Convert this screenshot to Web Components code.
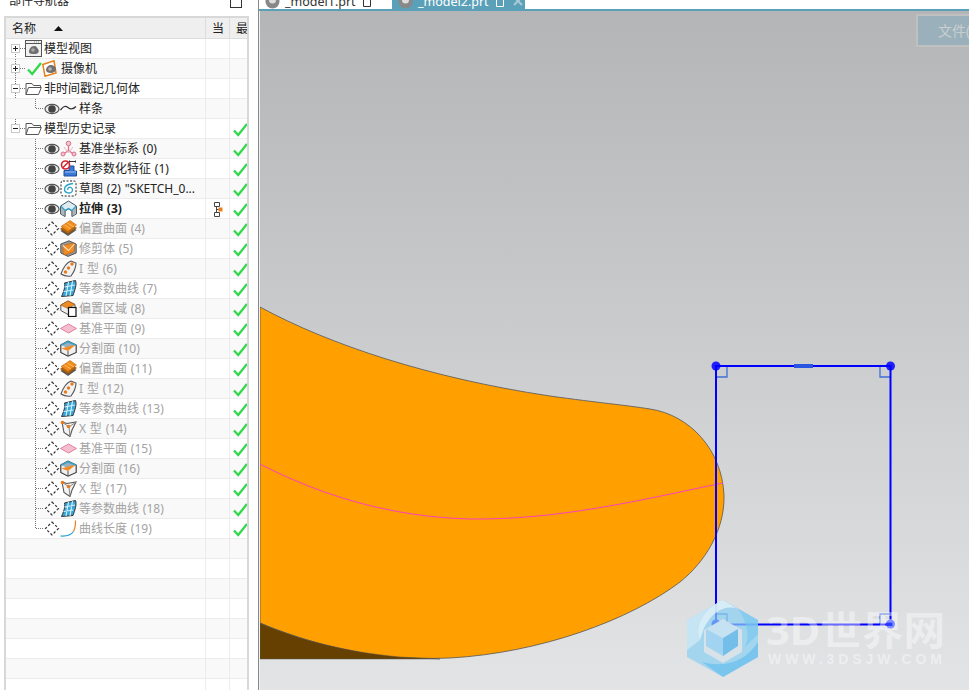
<!doctype html>
<html>
<head>
<meta charset="utf-8">
<title>部件导航器</title>
<style>
  html, body { margin: 0; height: 100%; overflow: hidden; background: #fff; }
  body { display: flex; height: 690px; font: 12px "Noto Sans", "Noto Sans CJK SC", sans-serif; color: #222; }
</style>
</head>
<body>
<part-navigator>
  <nav-row tree="plus" first icon="view">模型视图</nav-row>
  <nav-row tree="plus" checked icon="camera" alt>摄像机</nav-row>
  <nav-row tree="minus" icon="folder">非时间戳记几何体</nav-row>
  <nav-row tree="leaf" last eye icon="spline" alt>样条</nav-row>
  <nav-row tree="minus" end icon="folder" ok>模型历史记录</nav-row>
  <nav-row tree="leaf" eye icon="csys" ok alt>基准坐标系 (0)</nav-row>
  <nav-row tree="leaf" eye icon="nonparam" ok>非参数化特征 (1)</nav-row>
  <nav-row tree="leaf" eye icon="sketch" ok alt>草图 (2) "SKETCH_0...</nav-row>
  <nav-row tree="leaf" eye icon="extrude" ok bold current>拉伸 (3)</nav-row>
  <nav-row tree="leaf" off icon="offset" ok alt>偏置曲面 (4)</nav-row>
  <nav-row tree="leaf" off icon="trim" ok>修剪体 (5)</nav-row>
  <nav-row tree="leaf" off icon="itype" ok alt>I 型 (6)</nav-row>
  <nav-row tree="leaf" off icon="iso" ok>等参数曲线 (7)</nav-row>
  <nav-row tree="leaf" off icon="region" ok alt>偏置区域 (8)</nav-row>
  <nav-row tree="leaf" off icon="plane" ok>基准平面 (9)</nav-row>
  <nav-row tree="leaf" off icon="split" ok alt>分割面 (10)</nav-row>
  <nav-row tree="leaf" off icon="offset" ok>偏置曲面 (11)</nav-row>
  <nav-row tree="leaf" off icon="itype" ok alt>I 型 (12)</nav-row>
  <nav-row tree="leaf" off icon="iso" ok>等参数曲线 (13)</nav-row>
  <nav-row tree="leaf" off icon="xtype" ok alt>X 型 (14)</nav-row>
  <nav-row tree="leaf" off icon="plane" ok>基准平面 (15)</nav-row>
  <nav-row tree="leaf" off icon="split" ok alt>分割面 (16)</nav-row>
  <nav-row tree="leaf" off icon="xtype" ok>X 型 (17)</nav-row>
  <nav-row tree="leaf" off icon="iso" ok alt>等参数曲线 (18)</nav-row>
  <nav-row tree="leaf" last off icon="length" ok>曲线长度 (19)</nav-row>
  <nav-row alt></nav-row>
  <nav-row></nav-row>
  <nav-row alt></nav-row>
  <nav-row></nav-row>
  <nav-row alt></nav-row>
  <nav-row></nav-row>
  <nav-row alt></nav-row>
  <nav-row></nav-row>
</part-navigator>
<model-view>
  <doc-tab>_model1.prt</doc-tab>
  <doc-tab active>_model2.prt</doc-tab>
</model-view>

<script>
const ICONS = {
  view: `<rect x=".5" y=".5" width="16" height="16" fill="#f1f1f1" stroke="#555"/><path d="M1 3.500h15" stroke="#555"/><path d="M9 2h1M11 2h1M13 2h1" stroke="#999"/><path d="M4 12c0-3 2-6 5-6s3 2 4 3 1 3 0 4-3 1-4 1-5 0-5-2z" fill="#707070"/><circle cx="8" cy="10" r="1.800" fill="#aaa"/>`,
  camera: `<path d="M.8 4.500 12 .8 14 13 3 16.200z" fill="#fff" stroke="#e8801a" stroke-width="1.500"/><path d="M4 10c0-3 3-5 5-5s5 2 5 4-2 4-5 4-5-1-5-3z" fill="#707070"/><circle cx="8" cy="9" r="1.800" fill="#b5b5b5"/>`,
  folder: `<path d="M1 14.500V3.500h6l1.500 2h7v2" fill="#fff" stroke="#555"/><path d="M1 14.500 3.500 7.500h12.800l-2.800 7z" fill="#fff" stroke="#555"/>`,
  spline: `<path d="M.5 10c3-4 5-4.500 7.500-2.500s5 2 8-1" fill="none" stroke="#333" stroke-width="1.300"/>`,
  csys: `<path d="M8.500 5.500v5M8.500 10.500l-5 3.500M8.500 10.500l5 3.500" stroke="#d9728d" stroke-width="1.300" fill="none"/><circle cx="8.500" cy="3.500" r="2.300" fill="#f4c3d0" stroke="#d9728d"/><circle cx="3" cy="14" r="2" fill="#f4c3d0" stroke="#d9728d"/><circle cx="14" cy="14" r="2" fill="#f4c3d0" stroke="#d9728d"/><path d="M4 7 8.500 13 13 7" fill="none" stroke="#eeb2c2"/>`,
  nonparam: `<path d="M4 10.500h5V6h5v5h2.500v5H4z" fill="#3a78d6" stroke="#1d4f9e"/><path d="M5 12h11" stroke="#9cc2f2"/><circle cx="5.500" cy="5" r="4" fill="#fff" stroke="#d8222a" stroke-width="1.600"/><path d="M2.800 7.800 8.300 2.300" stroke="#d8222a" stroke-width="1.500"/><path d="M9.500 1.500h6M9.500 .5v2M15.500 .5v2" stroke="#333"/>`,
  sketch: `<rect x="1" y="1" width="15" height="15" rx="2" fill="#fff" stroke="#222" stroke-dasharray="2 1.500"/><path d="M13 3.500C8 4 4.500 6 4.500 9.500s4.500 4 6.500 3 2-4 0-5-4 1-3 2.500" fill="none" stroke="#28a3c7" stroke-width="1.300"/>`,
  extrude: `<path d="M.5 6 8.500 1 16.500 6v8l-4.500 2.500V11L8.500 9 5 11v5.500L.5 14z" fill="#dcecf2" stroke="#4d5a60"/><path d="M.8 6l4.200 4.500 3.500-2 3.500 2L16.200 6" fill="none" stroke="#2f9fca" stroke-width="1.200"/><path d="M5 11v5.500M12 11v5.500" stroke="#6e7a80"/><path d="M1 7v7l4 2v-5zM16 7v7l-4 2v-5z" fill="#8a9499" opacity=".6"/>`,
  offset: `<path d="M.5 11 9 5l7.500 5L8 16z" fill="#5a5a5a"/><path d="M.5 9 9 3l7.500 5L8 14z" fill="#b3640f" stroke="#7c4a16" stroke-width=".6"/><path d="M1 6.500 10 .5l6.500 4.500L8 11.500z" fill="#f28d1c" stroke="#b86a14" stroke-width=".6"/><path d="M4.500 5 11 9M7.500 3 14 7" stroke="#ffc070" stroke-width=".9"/>`,
  trim: `<path d="M.8 4 9 .8 16.200 4v9L8 16.400.8 13z" fill="#9a9a9a" stroke="#555"/><path d="M3 5.500l9.500-2.500 2 1v7.500L5.500 15 3 13.500z" fill="#ef8b24" stroke="#a85f16" stroke-width=".6"/><path d="M3 5.500l5.500 5L14.500 4" fill="none" stroke="#ffe0b8" stroke-width="1.100"/>`,
  itype: `<path d="M1 14C3 8 6 3 11 1l5 2c0 5-2 9-5 13-3 .5-7 0-10-2z" fill="#f2f2f2" stroke="#555" stroke-width="1.100"/><circle cx="12" cy="4" r="1.700" fill="#e87a1c"/><circle cx="8.500" cy="8" r="1.700" fill="#e87a1c"/><circle cx="5.500" cy="12" r="1.700" fill="#e87a1c"/>`,
  iso: `<path d="M4.500 3 15.500.5c1.500 4-.5 9-2.500 15L1.500 16.500C3.500 12 5.500 7 4.500 3z" fill="#39a6d8" stroke="#333"/><path d="M4.500 7 15 5M3.500 11.500 13.500 10M8.500 2 6 16M12.500 1.200 10 15.800" stroke="#d6f1fb" stroke-width="1.100" fill="none"/>`,
  region: `<path d="M.8 5 8 1 15 4.500v6L8 14.500.8 10.500z" fill="#eee" stroke="#555"/><path d="M.8 5 8 1 15 4.500 8 8.500z" fill="#ef8b24" stroke="#a85f16" stroke-width=".7"/><rect x="8.500" y="7.500" width="7.500" height="9" fill="#fff" stroke="#111" stroke-width="1.200"/>`,
  plane: `<path d="M.5 8.500 8.500 4 16.500 8.500 8.500 13z" fill="#f6bdd0" stroke="#e0809f"/>`,
  split: `<path d="M.8 5 8 1l8.200 4v7.500L8 16.200.8 12.500z" fill="#f0f0f0" stroke="#333" stroke-width="1.100"/><path d="M1.500 5 8 1.800 15.500 5 8 8.500z" fill="#9ab0bb"/><path d="M1.500 8.500 10 6l5.500-1L8 11z" fill="#ef8b24"/><path d="M1.500 5 8 1.800 15.500 5" fill="none" stroke="#37a5cc" stroke-width="1.400"/><path d="M8 11v5" stroke="#555"/>`,
  xtype: `<path d="M2 2 7 3.500 16 2l-4 8-2 6.500-6-4z" fill="#f4f4f4" stroke="#555" stroke-width="1.100"/><path d="M16 2 9 7l1 9.500M9 7 2 2" fill="none" stroke="#888"/><circle cx="2.500" cy="2.500" r="1.800" fill="#e87a1c"/><circle cx="8.500" cy="6.500" r="1.800" fill="#e87a1c"/>`,
  length: `<path d="M.5 16c6 .5 10.500-1 13-4.500" fill="none" stroke="#1c9ed0" stroke-width="1.200"/><path d="M13.500 11.500C15 9 15.500 5 15.500 .5" fill="none" stroke="#e8801a" stroke-width="1.200"/>`
};

const svgIcon = (name, size = 17) =>
  `<svg width="${size}" height="${size}" viewBox="0 0 17 17">${ICONS[name] || ""}</svg>`;

const EYE = `<svg width="16" height="17" viewBox="0 0 16 17"><ellipse cx="8" cy="9" rx="7" ry="4.700" fill="#eee" stroke="#555" stroke-width="1.200"/><circle cx="8" cy="9" r="3.800" fill="#444"/></svg>`;
const HIDDEN = `<svg width="16" height="17" viewBox="0 0 16 17"><path d="M8 2 14.500 8.500 8 15 1.500 8.500z" fill="none" stroke="#333" stroke-width="1.200" stroke-dasharray="2.500 2"/></svg>`;
const CHECK = `<svg width="15" height="14" viewBox="0 0 15 14"><path d="M1 7.500 5.200 12 14 1" fill="none" stroke="#2fd94a" stroke-width="2.300"/></svg>`;
const FLOW = `<svg width="9" height="15" viewBox="0 0 9 15"><path d="M.5 .5h5v4h-5zM.5 10.500h5v4h-5z" fill="#fff" stroke="#444"/><path d="M4.500 5.500h4v4h-4z" fill="#e8801a"/><path d="M2.500 4.500v6M2.500 7.500h2" stroke="#444"/></svg>`;

class PartNavigator extends HTMLElement {
  constructor() {
    super();
    const shadow = this.attachShadow({ mode: "open" });
    shadow.innerHTML = `
      <style>
        :host { display: flex; flex-direction: column; flex: none; width: 258px; height: 690px; overflow: hidden; background: #fff; }
        .title { display: flex; justify-content: space-between; height: 16px; padding: 0 16px 0 9px; overflow: hidden; }
        .title span { margin-top: -8px; line-height: 17px; }
        .title i { display: block; width: 10px; height: 8px; margin-top: -2px; border: 1px solid #333; }
        .table { width: 241px; margin-left: 4px; border: 2px solid #d8d8d8; border-bottom: 0; flex: 1; overflow: hidden; }
        .head { display: grid; grid-template-columns: 199px 1px 23px 1px 17px; height: 21px; background: #efefef; border-bottom: 1px solid #dcdcdc; box-sizing: border-box; line-height: 21px; }
        .head b { font-weight: normal; white-space: nowrap; overflow: hidden; }
        .name { display: flex; align-items: center; padding-left: 6px; }
        .name svg { margin-left: 18px; }
        .rule { background: #dcdcdc; }
        .cur { padding-left: 6px; }
        .last { padding-left: 6px; }
      </style>
      <div class="title"><span>部件导航器</span><i></i></div>
      <div class="table">
        <div class="head">
          <b class="name">名称<svg width="9" height="5" viewBox="0 0 9 5"><path d="M0 5 4.500 0 9 5z" fill="#111"/></svg></b>
          <span class="rule"></span><b class="cur">当</b><span class="rule"></span><b class="last">最</b>
        </div>
        <slot></slot>
      </div>`;
  }
}

class NavRow extends HTMLElement {
  connectedCallback() {
    const shadow = this.attachShadow({ mode: "open" });
    const has = (a) => this.hasAttribute(a);
    const tree = this.getAttribute("tree");
    const icon = this.getAttribute("icon");

    let lines = "";
    if (tree === "plus" || tree === "minus") {
      const from = has("first") ? 9 : 0;
      const to = has("end") ? 9 : 20;
      lines = `<path d="M9.500 ${from}V${to}M14 9.500h6" stroke="#777" stroke-dasharray="1 1" fill="none"/>
        <rect x="5.500" y="5.500" width="8" height="8" fill="#fff" stroke="#c8c8c8"/>
        <path d="M7 9.500h5${tree === "plus" ? "M9.500 7v5" : ""}" stroke="#222"/>`;
      if (has("end")) lines += `<path d="M29.500 17v3" stroke="#777" stroke-dasharray="1 1"/>`;
    } else if (tree === "leaf") {
      lines = `<path d="M29.500 0V${has("last") ? 9.5 : 20}M30 9.500h8" stroke="#777" stroke-dasharray="1 1" fill="none"/>`;
    }
    const width = tree === "leaf" ? 38 : 19;

    shadow.innerHTML = `
      <style>
        :host { display: grid; grid-template-columns: 199px 1px 23px 1px 17px; height: 20px; box-sizing: border-box; border-bottom: 1px solid #ececec; background: ${has("alt") ? "#f9f9f9" : "#fff"}; color: ${has("off") ? "#a3a3a3" : "#222"}; font-weight: ${has("bold") ? 700 : 400}; }
        .name { display: flex; align-items: center; white-space: nowrap; overflow: hidden; line-height: 19px; word-spacing: .7px; }
        svg { display: block; flex: none; }
        .label { margin-left: 2px; }
        .rule { background: #ececec; }
        .cell { display: flex; align-items: center; overflow: hidden; padding-top: 2px; box-sizing: border-box; }
        .cur { padding-left: 8px; }
        .last { padding-left: 3px; }
      </style>
      <div class="name">
        ${tree ? `<svg width="${width}" height="19" viewBox="0 0 ${width} 19">${lines}</svg>` : ""}
        ${has("checked") ? CHECK.replace('width="15"', 'width="17"').replace('viewBox="0 0 15 14"', 'viewBox="-1 0 15 14"') : ""}
        ${has("eye") ? EYE : ""}${has("off") ? HIDDEN : ""}
        ${icon ? svgIcon(icon) : ""}
        <span class="label"><slot></slot></span>
      </div>
      <span class="rule"></span>
      <div class="cell cur">${has("current") ? FLOW : ""}</div>
      <span class="rule"></span>
      <div class="cell last">${has("ok") ? CHECK : ""}</div>`;
  }
}

class DocTab extends HTMLElement {
  connectedCallback() {
    const shadow = this.attachShadow({ mode: "open" });
    const active = this.hasAttribute("active");
    shadow.innerHTML = `
      <style>
        :host { display: flex; width: 133px; height: 9px; overflow: hidden; box-sizing: border-box; padding-left: 6px; background: ${active ? "#5ba0b9" : "#fff"}; color: ${active ? "#fff" : "#333"}; font-size: 12.500px; }
        .in { display: flex; gap: 5px; margin-top: -8px; height: 18px; align-items: center; }
        .doc { margin-left: 1px; }
      </style>
      <div class="in">
        <svg width="15" height="15" viewBox="0 0 15 15"><circle cx="7.500" cy="7.500" r="7" fill="#888"/><circle cx="7.500" cy="6" r="3.500" fill="#ddd"/></svg>
        <slot></slot>
        <svg class="doc" width="10" height="12" viewBox="0 0 10 12"><path d="M1.500 .5h5l2 2v9h-7z" fill="none" stroke="${active ? "#fff" : "#333"}"/></svg>
        ${active ? `<svg style="margin-left:3px" width="10" height="10" viewBox="0 0 10 10"><path d="M1 1l8 8M9 1l-8 8" stroke="#a9cbd8" stroke-width="2"/></svg>` : ""}
      </div>`;
  }
}

class SiteWatermark extends HTMLElement {
  constructor() {
    super();
    const shadow = this.attachShadow({ mode: "open" });
    shadow.innerHTML = `
      <style>
        :host { position: absolute; left: 427px; top: 589px; display: block; width: 270px; height: 90px; }
        svg { display: block; overflow: visible; }
        text { fill: #fff; }
      </style>
      <svg width="270" height="90" viewBox="687 600 270 90">
        <path d="M723 600 758 620V657L723 677 687 657V620z" fill="#8ad0f3" opacity=".72"/>
        <path d="M723 600 738 609C748 622 750 640 744 648L758 634V620z" fill="#74c6ee" opacity=".6"/>
        <path d="M723 600 687 620V650L700 640C694 625 704 608 723 600z" fill="#d2e9f5" opacity=".75"/>
        <path d="M723 600 738 609C725 604 712 612 704 628L700 640C694 625 704 608 723 600z" fill="#e4f1f7" opacity=".8"/>
        <path d="M702 662 723 677 758 657V642C745 662 725 668 702 662z" fill="#62bdec" opacity=".65"/>
        <path d="M723 619 742 630V652L723 663 704 652V630z" fill="#e3e5e7" opacity=".8"/>
        <path d="M706 629 723 620 738 629 723 638z" fill="#c4e2f2"/>
        <path d="M706 629 723 638V656L706 646z" fill="#a2d3f1"/>
        <path d="M723 638 738 629V646L723 656z" fill="#74bfe9"/>
        <text x="766" y="645" font-family="'Noto Sans','Noto Sans CJK SC',sans-serif" font-weight="700" font-size="40" textLength="179" lengthAdjust="spacingAndGlyphs" opacity=".42">3D世界网</text>
        <text x="768" y="664" font-family="'Liberation Sans',sans-serif" font-weight="700" font-size="14" textLength="174" opacity=".42">WWW.3DSJW.COM</text>
      </svg>`;
  }
}

class ModelView extends HTMLElement {
  constructor() {
    super();
    const shadow = this.attachShadow({ mode: "open" });
    shadow.innerHTML = `
      <style>
        :host { display: flex; flex-direction: column; flex: 1; min-width: 0; height: 690px; overflow: hidden; border-left: 1px solid #858a8e; }
        .tabs { display: flex; flex: none; height: 9px; background: #fff; }
        .accent { flex: none; height: 2px; background: #5ba0b9; }
        .port { position: relative; flex: 1; display: flex; border-left: 1px solid #f0f0f0; background: linear-gradient(#b4b5b7, #e3e4e6); overflow: hidden; }
        .port > svg { display: block; }
        .file { position: absolute; left: 656px; top: 3px; width: 60px; height: 29px; border: 2px solid #c0c0c0; background: #9ab1bb; color: #c9ced1; font-size: 14px; line-height: 29px; padding-left: 20px; white-space: nowrap; }
      </style>
      <div class="tabs"><slot></slot></div>
      <div class="accent"></div>
      <div class="port">
        <svg width="709" height="679" viewBox="260 11 709 679">
          <path d="M260 307C330 345 430 378 550 396 600 403 625 405 650 409 690 415 722 450 724 495 725 530 705 562 680 582 630 620 540 653 450 658 420 659 395 658 380 656 340 650 300 640 260 623z" fill="#ff9f00" stroke="#555" stroke-width=".8"/>
          <path d="M260 623C300 640 345 652 400 657L440 659H260z" fill="#664000" stroke="#555" stroke-width=".5"/>
          <path d="M260 464C320 495 390 517 470 519 560 520 640 500 723 483" fill="none" stroke="#ff40c0"/>
          <path d="M717 377H727V367M880 367V377H890M717 614H727V624M880 624V614H890" fill="none" stroke="#3f6fd8" stroke-width="1.300"/>
          <path d="M716 366H890.500V624.500H716z" fill="none" stroke="#0000ff" stroke-width="2"/>
          <path d="M794 366H813" stroke="#2a55e0" stroke-width="4"/>
          <circle cx="716" cy="366" r="4.500" fill="#0000ff" opacity=".85"/>
          <circle cx="890.500" cy="366" r="4.500" fill="#0000ff" opacity=".85"/>
          <circle cx="716" cy="624" r="4.500" fill="#0000ff"/>
          <circle cx="890.500" cy="624" r="4.500" fill="#2a3cff"/>
        </svg>
        <div class="file">文件(F)</div>
        <site-watermark></site-watermark>
      </div>`;
  }
}

customElements.define("part-navigator", PartNavigator);
customElements.define("nav-row", NavRow);
customElements.define("doc-tab", DocTab);
customElements.define("site-watermark", SiteWatermark);
customElements.define("model-view", ModelView);
</script>
</body>
</html>
